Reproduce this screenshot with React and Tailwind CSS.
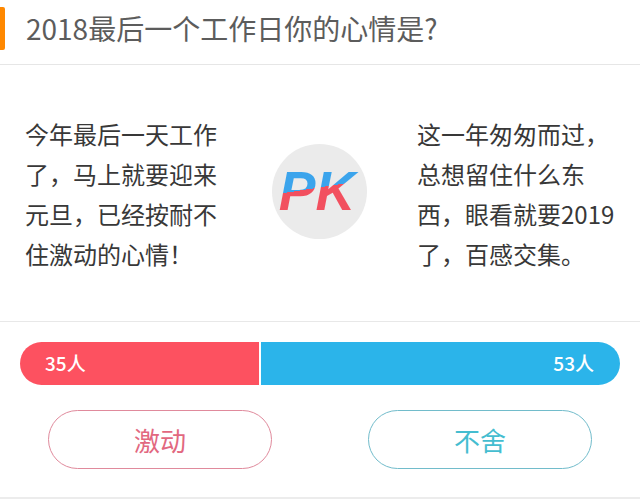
import React from "react";

const F = { fontFamily: '"Noto Sans CJK SC", "Noto Sans", sans-serif' };

export default function App() {
  const left = ["今年最后一天工作", "了，马上就要迎来", "元旦，已经按耐不", "住激动的心情！"];
  const right = ["这一年匆匆而过，", "总想留住什么东", "西，眼看就要2019", "了，百感交集。"];
  const a = 35;
  const b = 53;
  return (
    <div className="w-[640px] h-[499px] bg-white overflow-hidden" style={F}>
      {/* header */}
      <div className="h-[65px] border-b border-[#e6e6e6] flex items-start">
        <div className="mt-[7px] w-[5px] h-[43px] bg-[#ff8800] rounded-r-[2px]" />
        <div className="ml-[21px] mt-[7px] h-[43px] leading-[43px] text-[28px] text-[#5c5c5c] whitespace-nowrap">
          2018最后一个工作日你的心情是?
        </div>
      </div>

      {/* content */}
      <div className="h-[257px] border-b border-[#e8e8e8] flex items-center">
        <div className="w-[272px] pl-[25px] text-[24px] leading-[40px] text-[#383838] pt-[2px]">
          {left.map((l) => (
            <div key={l} className="whitespace-nowrap">{l}</div>
          ))}
        </div>
        <div className="w-[95px] h-[95px] rounded-full bg-[#ebebeb] flex items-center justify-center shrink-0 -mt-[4px]">
          <span
            className="text-[55px] leading-[55px] font-bold italic bg-[linear-gradient(171deg,#3ba4ec_44%,#f2505f_44%)] bg-clip-text text-transparent pr-[5px]"
            style={{ fontFamily: '"Liberation Sans", Arial, sans-serif' }}
          >
            PK
          </span>
        </div>
        <div className="pl-[50px] text-[24px] leading-[40px] text-[#383838] pt-[2px]">
          {right.map((l) => (
            <div key={l} className="whitespace-nowrap">{l}</div>
          ))}
        </div>
      </div>

      {/* bar */}
      <div className="px-[20px] pt-[20px]">
        <div className="h-[43px] flex rounded-full overflow-hidden">
          <div
            className="bg-[#fd5160] flex items-center pl-[25px] text-white text-[19px] font-medium"
            style={{ width: `${(a / (a + b)) * 100}%` }}
          >
            {a}人
          </div>
          <div className="w-[2px] bg-white" />
          <div className="flex-1 bg-[#2bb4ea] flex items-center justify-end pr-[26px] text-white text-[19px] font-medium">
            {b}人
          </div>
        </div>
      </div>

      {/* buttons */}
      <div className="grid grid-cols-2 mt-[25px]">
        <div className="flex justify-center">
          <button className="w-[224px] h-[59px] rounded-full border border-[#e08a9c] text-[#e2687f] text-[26px] bg-white" style={F}>
            激动
          </button>
        </div>
        <div className="flex justify-center">
          <button className="w-[224px] h-[59px] rounded-full border border-[#72bccb] text-[#45bdd0] text-[26px] bg-white" style={F}>
            不舍
          </button>
        </div>
      </div>

      <div className="mt-[28px] h-[2px] bg-[#ececec]" />
    </div>
  );
}
